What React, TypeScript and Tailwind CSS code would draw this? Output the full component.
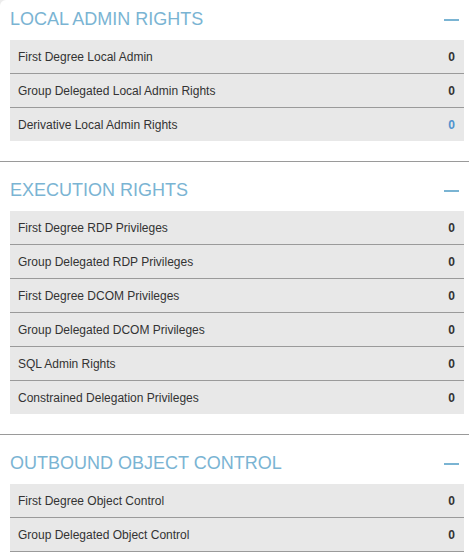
import React from 'react';

type Row = { label: string; value: number; link?: boolean };

// `cut` marks a list that runs on past the bottom of the window
const sections: { title: string; rows: Row[]; cut?: boolean }[] = [
  {
    title: 'LOCAL ADMIN RIGHTS',
    rows: [
      { label: 'First Degree Local Admin', value: 0 },
      { label: 'Group Delegated Local Admin Rights', value: 0 },
      { label: 'Derivative Local Admin Rights', value: 0, link: true },
    ],
  },
  {
    title: 'EXECUTION RIGHTS',
    rows: [
      { label: 'First Degree RDP Privileges', value: 0 },
      { label: 'Group Delegated RDP Privileges', value: 0 },
      { label: 'First Degree DCOM Privileges', value: 0 },
      { label: 'Group Delegated DCOM Privileges', value: 0 },
      { label: 'SQL Admin Rights', value: 0 },
      { label: 'Constrained Delegation Privileges', value: 0 },
    ],
  },
  {
    title: 'OUTBOUND OBJECT CONTROL',
    cut: true,
    rows: [
      { label: 'First Degree Object Control', value: 0 },
      { label: 'Group Delegated Object Control', value: 0 },
    ],
  },
];

export default function App() {
  return (
    <div className="h-[552px] overflow-hidden bg-[#ececec] font-['Liberation_Sans',Arial,sans-serif]">
      <div className="bg-white rounded-tl-[6px] min-h-full">
        {sections.map((section, i) => (
          <div key={section.title}>
            {/* Separator between sections */}
            {i > 0 && <div className="h-px bg-[#9a9a9a] mt-5 mb-[9px]" />}
            <div className="flex items-center justify-between h-10 pl-2.5 pr-[10px]">
              <h2 className="text-[18px] leading-none text-[#7ab4d3] -mt-[2px]">{section.title}</h2>
              <div className="w-[15px] h-[2px] bg-[#7ab4d3]" />
            </div>
            <div className="ml-2.5 mr-[5px]">
              {section.rows.map((row, j) => {
                const last = j === section.rows.length - 1 && !section.cut;
                return (
                  <div
                    key={row.label}
                    className={`flex items-center justify-between bg-[#e8e8e8] pl-2 pr-[9px] text-[12px] ${
                      last ? 'h-[33px]' : 'h-[34px] border-b border-[#9a9a9a]'
                    }`}
                  >
                    <span className="text-[#333]">{row.label}</span>
                    <span className={`font-bold ${row.link ? 'text-[#4f93ce]' : 'text-[#333]'}`}>{row.value}</span>
                  </div>
                );
              })}
            </div>
          </div>
        ))}
      </div>
    </div>
  );
}
